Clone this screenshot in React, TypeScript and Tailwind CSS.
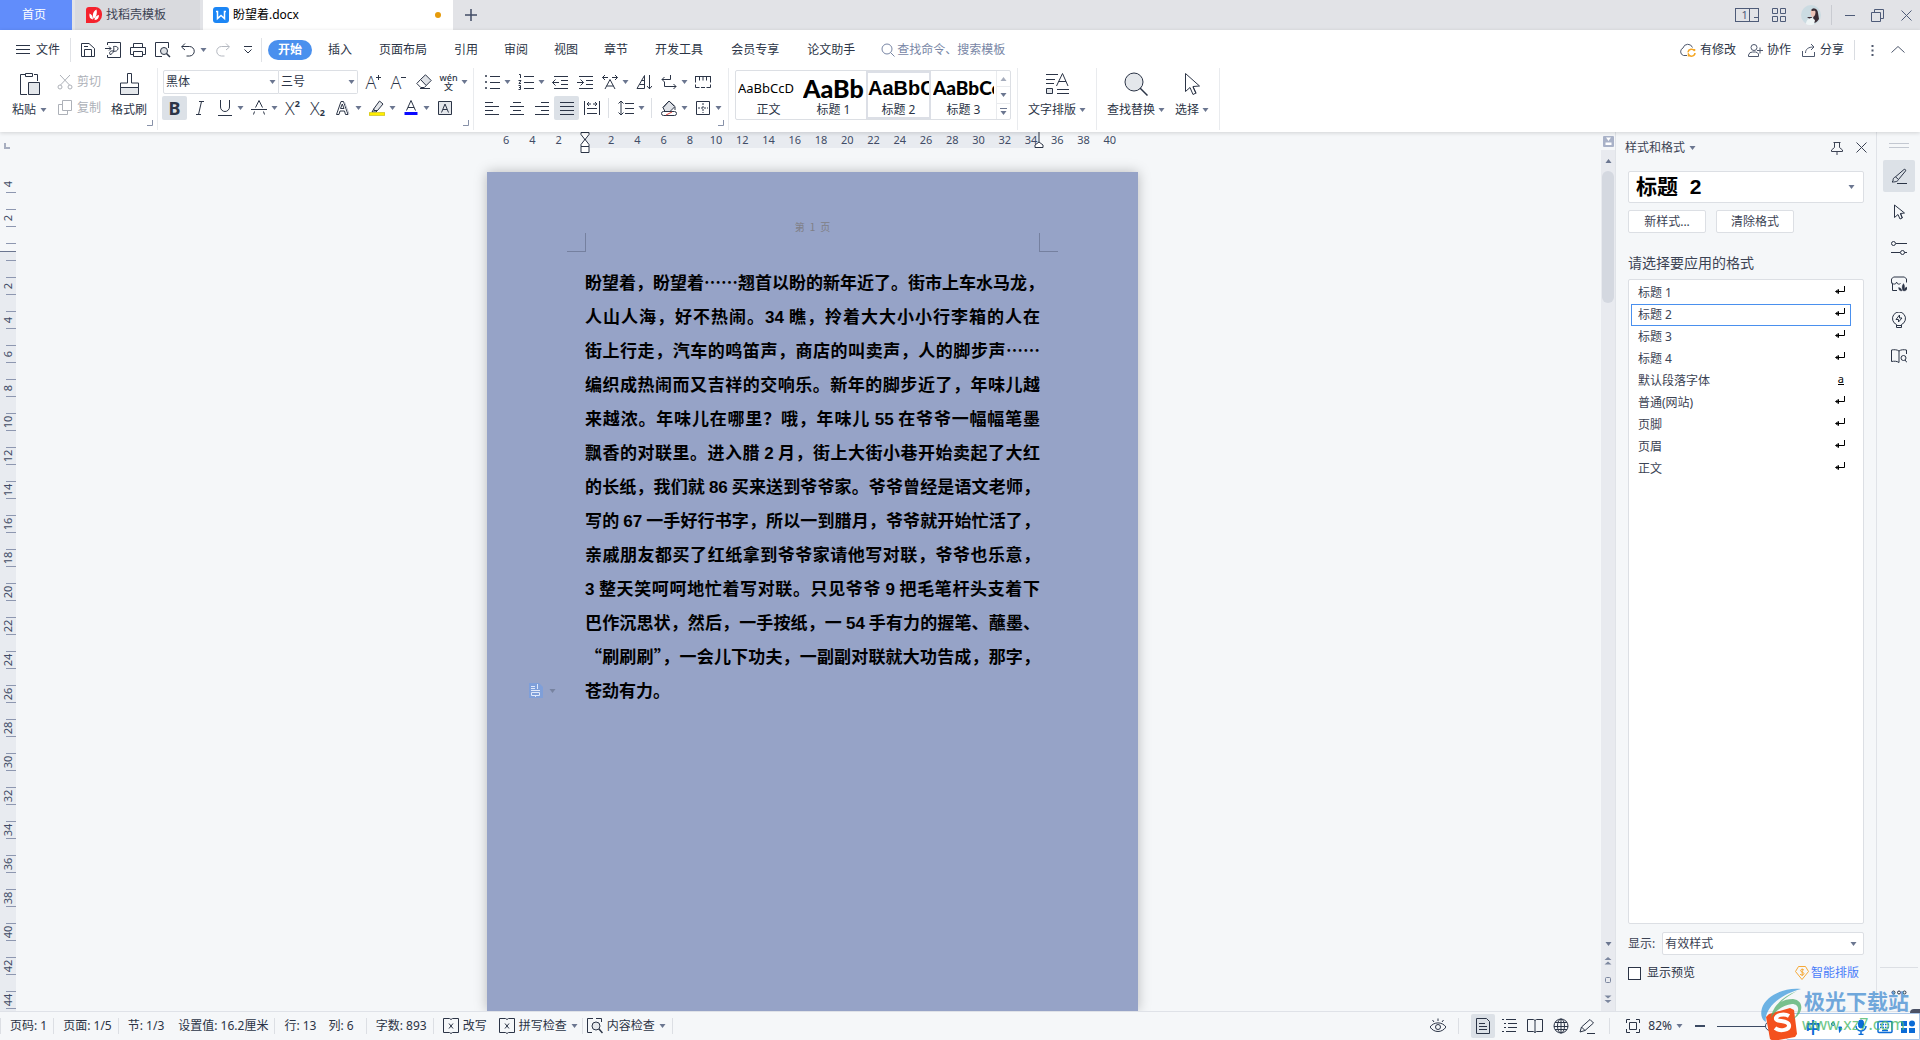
import { FC, ReactNode, useState } from 'react';
import clsx from 'clsx';

const MENU_TABS = [
  '插入',
  '页面布局',
  '引用',
  '审阅',
  '视图',
  '章节',
  '开发工具',
  '会员专享',
  '论文助手',
];

const DOC_LINES = [
  '盼望着，盼望着……翘首以盼的新年近了。街市上车水马龙，',
  '人山人海，好不热闹。34 瞧，拎着大大小小行李箱的人在',
  '街上行走，汽车的鸣笛声，商店的叫卖声，人的脚步声……',
  '编织成热闹而又吉祥的交响乐。新年的脚步近了，年味儿越',
  '来越浓。年味儿在哪里？哦，年味儿 55 在爷爷一幅幅笔墨',
  '飘香的对联里。进入腊 2 月，街上大街小巷开始卖起了大红',
  '的长纸，我们就 86 买来送到爷爷家。爷爷曾经是语文老师，',
  '写的 67 一手好行书字，所以一到腊月，爷爷就开始忙活了，',
  '亲戚朋友都买了红纸拿到爷爷家请他写对联，爷爷也乐意，',
  '3 整天笑呵呵地忙着写对联。只见爷爷 9 把毛笔杆头支着下',
  '巴作沉思状，然后，一手按纸，一 54 手有力的握笔、蘸墨、',
  '“刷刷刷”，一会儿下功夫，一副副对联就大功告成，那字，',
  '苍劲有力。',
];

const STYLE_LIST = [
  { name: '标题 1', mark: 'para' },
  { name: '标题 2', mark: 'para' },
  { name: '标题 3', mark: 'para' },
  { name: '标题 4', mark: 'para' },
  { name: '默认段落字体', mark: 'char' },
  { name: '普通(网站)', mark: 'para' },
  { name: '页脚', mark: 'para' },
  { name: '页眉', mark: 'para' },
  { name: '正文', mark: 'para' },
];

const GALLERY = [
  { name: '正文', sample: 'AaBbCcD', font: 'text-[13px]' },
  { name: '标题 1', sample: 'AaBbC', font: "font-['Lato'] text-[25px] font-black" },
  { name: '标题 2', sample: 'AaBbC', font: "font-['Liberation_Sans'] text-[20px] font-bold" },
  { name: '标题 3', sample: 'AaBbCc', font: "font-['Lato'] text-[19px] font-black" },
];

// ruler numbers, counted outwards from the margin
const H_RULER = [6, 4, 2, 0, ...Array.from({ length: 20 }, (_, i) => (i + 1) * 2)];
const V_RULER = Array.from({ length: 22 }, (_, i) => (i + 1) * 2);

const Icon: FC<{ size?: number; box?: number; className?: string; children: ReactNode }> = ({
  size = 16,
  box = 16,
  className,
  children,
}) => (
  <svg
    width={size}
    height={size}
    viewBox={`0 0 ${box} ${box}`}
    fill="none"
    stroke="currentColor"
    strokeWidth={1}
    className={clsx('shrink-0', className)}
    aria-hidden="true"
  >
    {children}
  </svg>
);

const Caret: FC<{ className?: string }> = ({ className }) => (
  <svg width="7" height="4" viewBox="0 0 7 4" className={clsx('shrink-0 text-[#6b7690]', className)} aria-hidden="true">
    <path d="M0.5 0h6L3.5 4z" fill="currentColor" />
  </svg>
);

const Tool: FC<{ label: string; caret?: boolean; active?: boolean; children: ReactNode }> = ({
  label,
  caret,
  active,
  children,
}) => (
  <button
    aria-label={label}
    className={clsx('flex h-6 shrink-0 items-center rounded-xs', active && 'bg-[#dce1e7]')}
  >
    <span className="flex w-[25px] items-center justify-center">{children}</span>
    {caret && (
      <span className="w-[9px]">
        <Caret />
      </span>
    )}
  </button>
);

const Launcher = () => (
  <button aria-label="更多设置" className="flex h-2 w-full justify-end pr-1">
    <Icon size={6} box={6} className="text-[#8791a8]">
      <path d="M5.5 0v5.5H0" />
    </Icon>
  </button>
);

const GroupSep = () => <div className="mt-0.5 h-[62px] w-px shrink-0 bg-[#e9ebee]" />;

const TitleBar = () => (
  <header className="flex h-[30px] shrink-0 bg-[#e2e3e7]">
    <button className="w-[72px] bg-[#618dfb] pr-1 text-white">首页</button>
    <button className="ml-[3px] flex w-[125px] items-center gap-1 bg-[#d9dade] pl-[11px] text-[#3c4354]">
      <Icon className="text-white">
        <path d="M3 0h6.5A6.5 6.5 0 0 1 16 6.5V8a8 8 0 0 1-8 8H0V3a3 3 0 0 1 3-3z" fill="#f5222d" stroke="none" />
        <path
          d="M7.800 12C6 8 7 4.500 10.500 2.500c1 3.500 0 7-2.700 9.500zM7 12.500C4 12 3 10 3.500 6.500c2.500 1 3.500 3 3.500 6zM8.500 13c3 0 4.500-2 4.500-5-2.500.5-4 2-4.500 5z"
          fill="currentColor"
          stroke="none"
        />
      </Icon>
      找稻壳模板
    </button>
    <button className="ml-[3px] flex w-[250px] items-center gap-1 bg-white pr-3 pl-2.5 text-black">
      <Icon className="text-white">
        <rect width="16" height="16" rx="3" fill="#1c86f5" stroke="none" />
        <path d="M3 4.500h1.500v7L8 8.500l3.500 3V4.500H13" strokeWidth="1.500" />
      </Icon>
      盼望着.docx
      <span className="ml-auto size-[6px] rounded-full bg-[#e69b0b]" />
    </button>
    <button aria-label="新建" className="ml-3 text-[#414c66]">
      <Icon size={12} box={12}>
        <path d="M6 0v12M0 6h12" strokeWidth="1.500" />
      </Icon>
    </button>
    <div className="ml-auto flex items-center pr-2 text-[#4e5b78]">
      <button aria-label="窗口" className="flex h-[14px] w-6 items-center border border-current text-[11px] leading-3">
        <span className="h-3 w-[15px] border-r border-current pl-1">1</span>
        <span className="ml-1 h-1.5 w-1 border-b border-current" />
      </button>
      <button aria-label="应用" className="ml-[13px]">
        <Icon size={14} box={14}>
          <path d="M.5.5h5v5h-5zM8.500.5h5v5h-5zM.5 8.500h5v5h-5zM8.500 8.500h5v5h-5z" />
        </Icon>
      </button>
      <button aria-label="帐户" className="ml-[15px]">
        <svg width="20" height="20" viewBox="0 0 20 20" aria-hidden="true">
          <circle cx="10" cy="10" r="10" fill="#cbdbe2" />
          <path d="M11 4c3-1.500 6 .5 6 4l1 6c-2 3-4 4-5 4l-1-7z" fill="#3a2c34" />
          <path d="M10.500 5c2-1 4 0 4 2.500S13 12 11.500 12 9 7 10.500 5z" fill="#edc4b8" />
          <path d="M10 5c2-2 4-1.500 5 .5l-4 .5zM6 12l5 0-1 3z" fill="#3a2c34" />
          <path d="M5 19c0-4 3-6 6-6l3 2-1 4.500c-3 1-6 .7-8-.5z" fill="#eef4f5" />
        </svg>
      </button>
      <span className="mx-2.5 h-5 w-px bg-[#c9cbd1]" />
      <button aria-label="最小化" className="mx-[3px]">
        <Icon size={10} box={10}>
          <path d="M0 5.500h10" />
        </Icon>
      </button>
      <button aria-label="还原" className="ml-[13px]">
        <Icon size={13} box={13}>
          <path d="M.5 3.500h9v9h-9zM3.500 3V.5h9v9H10" />
        </Icon>
      </button>
      <button aria-label="关闭" className="ml-[17px]">
        <Icon size={11} box={11}>
          <path d="M.5.5l10 10M10.500.5l-10 10" />
        </Icon>
      </button>
    </div>
  </header>
);

const QuickButton: FC<{ label: string; children: ReactNode }> = ({ label, children }) => (
  <button aria-label={label} className="flex w-[25px] justify-center">
    {children}
  </button>
);

const MenuBar = () => (
  <nav className="flex h-9 shrink-0 items-center pt-1 text-[#2b3446]">
    <button className="ml-4 flex items-center gap-1.5">
      <Icon size={14} box={14}>
        <path d="M0 2.500h14M0 6.500h14M0 10.500h14" />
      </Icon>
      文件
    </button>
    <span className="ml-2.5 h-6 w-px bg-[#e0e2e6]" />
    <div className="ml-1 flex items-center">
      <QuickButton label="保存">
        <Icon>
          <path d="M1.500 1.500h7.500l5.500 5v8h-13zM4.500 14V7.500h7V14M4 4.500h4" />
        </Icon>
      </QuickButton>
      <QuickButton label="输出为PDF">
        <Icon>
          <path d="M2.500 3V.5h13v15h-13V13M0 6.500h6M4 4.500l2 2-2 2M5 12.500c3.500-.5 4.500-5 3.500-8 3.500-.5 5.500 1 4 3.500-1 1.500-3.500 1.500-4.500 1-3-.5-4 1.500-3 3.500" />
        </Icon>
      </QuickButton>
      <QuickButton label="打印">
        <Icon>
          <path d="M3.500 5V1.500h9V5M3.500 12.500h-3v-7h15v7h-3M3.500 9.500h9v5h-9z" />
        </Icon>
      </QuickButton>
      <QuickButton label="打印预览">
        <Icon>
          <path d="M13.500 6V.5h-13v14H7" />
          <circle cx="9" cy="9" r="3.500" fill="#dfe2e6" />
          <path d="M11.500 11.500l3.500 3.500" strokeWidth="1.500" />
        </Icon>
      </QuickButton>
      <QuickButton label="撤销">
        <Icon>
          <path d="M5 1.500L1.500 5 5 8M2 4.500h7.500a4.500 4.500 0 0 1 0 9.500H6.500" />
        </Icon>
      </QuickButton>
      <Caret />
      <button aria-label="恢复" className="ml-2 text-[#b4b8c0]">
        <Icon>
          <path d="M11 1.500L14.500 5 11 8M14 4.500H6.500a4.500 4.500 0 0 0 0 9.500H9.500" />
        </Icon>
      </button>
      <button aria-label="自定义快速访问" className="ml-3">
        <Icon size={10} box={10}>
          <path d="M1 1.500h8M1.500 4.500L5 8l3.500-3.500" />
        </Icon>
      </button>
    </div>
    <span className="ml-2 h-6 w-px bg-[#e0e2e6]" />
    <button className="mr-[3px] ml-1.5 h-5 w-11 rounded-full bg-[#4a90ee] font-bold text-white">开始</button>
    {MENU_TABS.map((tab) => (
      <button key={tab} className={tab.length > 2 ? 'px-3.5' : 'px-[13px]'}>
        {tab}
      </button>
    ))}
    <label className="ml-3 flex items-center gap-0.5 text-[#7886a5]">
      <Icon size={14} box={14}>
        <circle cx="6" cy="6" r="5" />
        <path d="M9.500 9.500l4 4" />
      </Icon>
      <input
        aria-label="查找命令、搜索模板"
        placeholder="查找命令、搜索模板"
        className="w-32 bg-transparent outline-none placeholder:text-[#7886a5]"
      />
    </label>
    <div className="ml-auto flex items-center pr-[15px]">
      <button className="flex items-center gap-1">
        <Icon size={17} box={17} className="text-[#4e586d]">
          <path d="M8 13.500H4.500a4 4 0 0 1-.5-7.500 5 5 0 0 1 9.500-.5" />
          <path d="M9 10a3.500 3.500 0 0 1 6.500-1v-2M16 11a3.500 3.500 0 0 1-6.500 1.500v2" stroke="#f5a623" strokeWidth="1.500" />
        </Icon>
        有修改
      </button>
      <button className="ml-3 flex items-center gap-1">
        <Icon size={15} box={15} className="text-[#4e586d]">
          <circle cx="6" cy="4.500" r="3" />
          <path d="M.5 13.500V12a4 4 0 0 1 4-3h3a4 4 0 0 1 3 2v2.500zM9 7.500h6M12 4.500v6" />
        </Icon>
        协作
      </button>
      <button className="ml-2.5 flex items-center gap-1">
        <Icon size={15} box={15} className="text-[#4e586d]">
          <path d="M1.500 8v5.500h12V9M4.500 10c0-4 3-6 8-6M10 1l3 3-3 3" />
        </Icon>
        分享
      </button>
      <span className="ml-2.5 h-5 w-px bg-[#d9dce1]" />
      <button aria-label="更多" className="ml-4">
        <Icon size={3} box={3} className="h-3">
          <path d="M.5-3.500h2v2h-2zM.5 1h2v2h-2zM.5 5.500h2v2h-2z" fill="#4e586d" stroke="none" />
        </Icon>
      </button>
      <button aria-label="收起功能区" className="ml-[17px] text-[#4e586d]">
        <Icon size={14} box={14}>
          <path d="M.5 9.500L7 3.500l6.500 6" />
        </Icon>
      </button>
    </div>
  </nav>
);

const ClipboardGroup = () => (
  <div className="flex w-[157px] shrink-0 flex-col">
    <div className="flex h-[54px] text-[#2b3446]">
      <button className="ml-3 flex flex-col items-center justify-between pt-1.5 pb-0.5">
        <Icon size={24} box={24}>
          <path d="M8 2.500H2.500v20H9M16 2.500h3.500V9" />
          <path d="M7.500 1.500h7v3h-7z" />
          <path d="M10.500 10.500h11v12h-11z" fill="#e4e7eb" />
        </Icon>
        <span className="flex items-center gap-1">
          粘贴
          <Caret />
        </span>
      </button>
      <div className="ml-2.5 flex flex-col gap-0.5 pt-1 text-[#adb1b8]">
        <button className="flex h-6 items-center gap-1">
          <Icon>
            <path d="M3 1l9.500 10M13 1L3.500 11" />
            <circle cx="3" cy="13" r="2" />
            <circle cx="13" cy="13" r="2" />
          </Icon>
          剪切
        </button>
        <button className="flex h-6 items-center gap-1">
          <Icon>
            <path d="M5.500.5h9v10h-9zM5 4.500H1.500v10h9V11" />
          </Icon>
          复制
        </button>
      </div>
      <button className="ml-2.5 flex flex-col items-center justify-between pt-1.5 pb-0.5">
        <Icon size={24} box={24}>
          <path d="M10.500 11V1.500h4V11h7v5.500h-18V11z" />
          <path d="M3.500 15.500h18v7h-18z" fill="#e4e7eb" />
        </Icon>
        格式刷
      </button>
    </div>
    <Launcher />
  </div>
);

const Letter: FC<{ children: ReactNode }> = ({ children }) => (
  <span className="font-['Open_Sans','Noto_Sans'] text-[18px] leading-5 font-light">{children}</span>
);

const FontGroup = () => (
  <div className="flex w-[315px] shrink-0 flex-col text-[#2b3446]">
    <div className="flex h-[54px] flex-col gap-0.5 pt-1 pl-1">
      <div className="flex h-6 items-center">
        <div className="relative ml-px flex h-6 w-[116px] items-center rounded-l-xs border border-[#dcdfe4]">
          <select aria-label="字体" className="w-full appearance-none bg-transparent pl-0.5 outline-none">
            <option>黑体</option>
          </select>
          <Caret className="absolute right-0.5" />
        </div>
        <div className="relative mr-[3px] flex h-6 w-[79px] items-center rounded-r-xs border border-l-0 border-[#dcdfe4]">
          <select aria-label="字号" className="w-full appearance-none bg-transparent pl-0.5 outline-none">
            <option>三号</option>
          </select>
          <Caret className="absolute right-0.5" />
        </div>
        <Tool label="增大字号">
          <Letter>A</Letter>
          <Icon size={5} box={5} className="mb-2.5">
            <path d="M2.500 0v5M0 2.500h5" />
          </Icon>
        </Tool>
        <Tool label="减小字号">
          <Letter>A</Letter>
          <Icon size={5} box={5} className="mb-2.5">
            <path d="M0 2.500h5" />
          </Icon>
        </Tool>
        <Tool label="清除格式">
          <Icon>
            <path d="M4.500 5.500L9.500.800l5.700 5.700-5 5z" fill="#dfe2e7" />
            <path d="M4.500 5.500L.800 9.500l4 4h3.500l2-2M4 14.500h10" />
          </Icon>
        </Tool>
        <Tool label="拼音指南" caret>
          <span className="flex flex-col items-center text-[9px] leading-[9px] font-medium">
            <span>wén</span>
            <span>文</span>
          </span>
        </Tool>
      </div>
      <div className="flex h-6">
        <Tool label="加粗" active>
          <b className="text-[18px] leading-5">B</b>
        </Tool>
        <Tool label="倾斜">
          <Icon>
            <path d="M7 1.500h5M4 14.500h5M9.500 1.500l-3 13" />
          </Icon>
        </Tool>
        <Tool label="下划线" caret>
          <Icon>
            <path d="M3.500 0v7a4.500 4.500 0 0 0 9 0V0M1 15.500h14" />
          </Icon>
        </Tool>
        <Tool label="删除线" caret>
          <Icon>
            <path d="M4.500 7.500L8 .5l3.500 7M0 9.500h16M3.500 11.500l-1 3M12.500 11.500l1 3" />
          </Icon>
        </Tool>
        <Tool label="上标">
          <Letter>X</Letter>
          <span className="mb-2 text-[9px] leading-3 font-bold">2</span>
        </Tool>
        <Tool label="下标">
          <Letter>X</Letter>
          <span className="mt-2.5 text-[9px] leading-3 font-bold">2</span>
        </Tool>
        <Tool label="文字效果" caret>
          <Icon>
            <path d="M1.500 14.500L6 1.500h2.500l4.500 13h-2.500l-1-3.500H5l-1 3.500zM5.500 8.500h3.500L7.300 4z" />
            <path d="M9.500 2l4.500 12" stroke="#b6bbc6" />
          </Icon>
        </Tool>
        <Tool label="突出显示" caret>
          <Icon>
            <path d="M5 8.500L10.500 1l3.500 3L8.500 10.500H5zM5 8.500l-2 3.500h4l1.500-1.500" fill="#e4e7eb" />
            <path d="M0 14h16" stroke="#ffee00" strokeWidth="3.500" />
            <path d="M.5 12.500h15v3H.5z" stroke="#b8ae3a" strokeWidth=".5" />
          </Icon>
        </Tool>
        <Tool label="字体颜色" caret>
          <Icon>
            <path d="M3.500 10.500L8 .5l4.500 10M5 7.500h6" />
            <path d="M1.500 13.500h13" stroke="#0a0aff" strokeWidth="3" />
          </Icon>
        </Tool>
        <Tool label="字符底纹">
          <Icon>
            <path d="M1.500 1.500h13v13h-13z" fill="#e4e7eb" />
            <path d="M4.500 12.500L8 4l3.500 8.500M6 9.500h4" />
          </Icon>
        </Tool>
      </div>
    </div>
    <Launcher />
  </div>
);

const ToolSep = () => <span className="mx-1 my-0.5 w-px bg-[#dcdfe4]" />;

const ParagraphGroup = () => (
  <div className="flex w-[254px] shrink-0 flex-col text-[#2b3446]">
    <div className="flex h-[54px] flex-col gap-0.5 pt-1 pl-[5px]">
      <div className="flex h-6">
        <Tool label="项目符号" caret>
          <Icon>
            <path d="M6 2.500h10M6 8.500h10M6 14.500h10M1.500 1.500h1v1h-1zM1.500 7.500h1v1h-1zM1.500 13.500h1v1h-1z" />
          </Icon>
        </Tool>
        <Tool label="编号" caret>
          <Icon>
            <path d="M6 2.500h10M6 8.500h10M6 14.500h10" />
            <path d="M1 .5h1.500v3.500M.5 6.500H3L1 9.500h2M.5 11.500h2v4H.5M1 13.500h1.500" />
          </Icon>
        </Tool>
        <Tool label="减少缩进量">
          <Icon>
            <path d="M2 2.500h14M9 6.500h7M9 10.500h7M2 14.500h14M.5 8.500H7M3.500 5.500l-3 3 3 3" />
          </Icon>
        </Tool>
        <Tool label="增加缩进量">
          <Icon>
            <path d="M2 2.500h14M9 6.500h7M9 10.500h7M2 14.500h14M0 8.500h6.500M3.500 5.500l3 3-3 3" />
          </Icon>
        </Tool>
        <Tool label="中文版式" caret>
          <Icon>
            <path d="M3 15L8 5.500 13 15M4.500 12h7M.5 3.500H6M3 1L.5 3.500 3 6M15.500 3.500H10M13 1l2.500 2.500L13 6" />
          </Icon>
        </Tool>
        <Tool label="排序">
          <Icon>
            <path d="M1 14.500L8.500 1.500v13zM3.500 10.500h5M5.500 6.500h3M13.500 1v14M11 12l2.500 2.800L16 12" />
          </Icon>
        </Tool>
        <Tool label="显示编辑标记" caret>
          <Icon>
            <path d="M9.500 1v4.500H1M3.500 3L1 5.500 3.500 8M3.500 8v4.500H15M12.500 10l2.500 2.500-2.500 2.500" />
          </Icon>
        </Tool>
        <Tool label="制表位">
          <Icon>
            <path d="M0 2.500h16M.5 2.500v6M4.500 2.500v4M8 2.500v4M11.500 2.500v4M15.500 2.500v6M.5 10.500v3h4M11.500 13.500h4v-3M6 13.500h4" />
          </Icon>
        </Tool>
      </div>
      <div className="flex h-6">
        <Tool label="左对齐">
          <Icon>
            <path d="M1 2.500h8M1 6.500h14M1 10.500h8M1 14.500h14" />
          </Icon>
        </Tool>
        <Tool label="居中对齐">
          <Icon>
            <path d="M4 2.500h8M1 6.500h14M4 10.500h8M1 14.500h14" />
          </Icon>
        </Tool>
        <Tool label="右对齐">
          <Icon>
            <path d="M7 2.500h8M1 6.500h14M7 10.500h8M1 14.500h14" />
          </Icon>
        </Tool>
        <Tool label="两端对齐" active>
          <Icon>
            <path d="M1 2.500h14M1 6.500h14M1 10.500h14M1 14.500h14" />
          </Icon>
        </Tool>
        <Tool label="分散对齐">
          <Icon>
            <path d="M.5 1v14M15.500 1v14M3 8.500h10M3 13.500h10M3 4h4M5 2L3 4l2 2M13 4H9M11 2l2 2-2 2" />
          </Icon>
        </Tool>
        <ToolSep />
        <Tool label="行距" caret>
          <Icon>
            <path d="M7 3.500h9M7 8.500h9M7 13.500h9M3 1v14M.5 3.500L3 1l2.500 2.500M.5 12.500L3 15l2.500-2.500" />
          </Icon>
        </Tool>
        <ToolSep />
        <Tool label="底纹" caret>
          <Icon>
            <path d="M2 7.500L8 1l6 5.500-5 5H4z" fill="#dfe2e7" />
            <path d="M2 7.500L8 1l5 5M14 7v3" />
            <rect x=".5" y="11.500" width="15" height="4" rx="2" fill="#fff" />
            <path d="M5 15l6-3" stroke="#e0483e" />
          </Icon>
        </Tool>
        <Tool label="边框" caret>
          <Icon>
            <path d="M1.500 1.500h13v13h-13z" />
            <path d="M8 3v10M3 8h10" strokeDasharray="2 1" />
          </Icon>
        </Tool>
      </div>
    </div>
    <Launcher />
  </div>
);

const StyleGallery: FC<{ current: string; onPick: (name: string) => void }> = ({ current, onPick }) => (
  <div className="mx-1.5 mt-1 flex h-[50px] w-[276px] shrink-0 rounded-xs border border-[#dcdfe4]">
    {GALLERY.map((style) => (
      <button
        key={style.name}
        onClick={() => onPick(style.name)}
        className={clsx(
          'flex w-[65px] flex-col items-center overflow-hidden border-2',
          current === style.name ? 'border-[#dcdfe6]' : 'border-transparent'
        )}
      >
        <span className={clsx('h-[30px] w-full overflow-hidden text-left leading-[30px] whitespace-nowrap text-black', style.font)}>
          {style.sample}
        </span>
        <span className="leading-[14px] text-[#2b3446]">{style.name}</span>
      </button>
    ))}
    <div className="flex flex-1 flex-col divide-y divide-[#e9ebee] border-l border-[#e9ebee]">
      <button aria-label="上一行" className="flex flex-1 items-center justify-center">
        <Caret className="rotate-180 opacity-60" />
      </button>
      <button aria-label="下一行" className="flex flex-1 items-center justify-center">
        <Caret />
      </button>
      <button aria-label="更多样式" className="flex flex-1 flex-col items-center justify-center gap-0.5">
        <span className="h-px w-[7px] bg-[#6b7690]" />
        <Caret />
      </button>
    </div>
  </div>
);

const BigTool: FC<{ label: string; icon: ReactNode }> = ({ label, icon }) => (
  <button className="flex h-[54px] shrink-0 flex-col items-center justify-between pt-1.5 pb-0.5 text-[#2b3446]">
    {icon}
    <span className="flex items-center gap-[3px]">
      {label}
      <Caret />
    </span>
  </button>
);

const Ribbon: FC<{ current: string; onPick: (name: string) => void }> = ({ current, onPick }) => (
  <div className="flex h-[66px] shrink-0">
    <ClipboardGroup />
    <GroupSep />
    <FontGroup />
    <GroupSep />
    <ParagraphGroup />
    <GroupSep />
    <StyleGallery current={current} onPick={onPick} />
    <GroupSep />
    <div className="px-2.5">
      <BigTool
        label="文字排版"
        icon={
          <Icon size={24} box={24}>
            <path d="M1 2.500h12M1 7.500h9M1 11.500h8M11.500 14L17.500 1.500 23 14M13.500 9.500h7.500M12 17.500h12M12 21.500h12" />
            <path d="M1.500 16.500h6v5h-6z" fill="#e4e7eb" />
          </Icon>
        }
      />
    </div>
    <GroupSep />
    <div className="flex gap-2.5 px-2.5">
      <BigTool
        label="查找替换"
        icon={
          <Icon size={24} box={24}>
            <circle cx="10" cy="10" r="9" fill="#e4e7eb" />
            <path d="M16 16l7.500 7.500" strokeWidth="1.500" />
          </Icon>
        }
      />
      <BigTool
        label="选择"
        icon={
          <Icon size={24} box={24}>
            <path d="M5.500 1.500v18l4.500-4 3 7 3-1.500-3-6.500 6.500-.5z" />
            <path d="M13 15l3 6.500" />
          </Icon>
        }
      />
    </div>
    <GroupSep />
  </div>
);

const VerticalRuler = () => (
  <div className="flex w-4 shrink-0 flex-col overflow-hidden pt-[11px] text-[11px] leading-3 text-[#414c66]">
    <Icon size={6} box={6} className="mb-[18px] ml-1 text-[#a7aec0]">
      <path d="M1 0v5h5" strokeWidth="2" />
    </Icon>
    {[4, 2].map((n) => (
      <div key={n} className="flex h-[34px] shrink-0 py-2 pl-1.5">
        <div className={clsx('flex flex-1 items-center border-[#8d97b0]', n === 4 ? 'border-b' : 'border-y')}>
          <span className="-ml-1 w-3 -rotate-90 text-center">{n}</span>
        </div>
      </div>
    ))}
    <div className="h-[34px] shrink-0">
      <div className="h-[17px] border-b border-[#6b7690] pt-2 pl-1.5">
        <div className="border-t border-[#8d97b0]" />
      </div>
      <div className="h-[17px] bg-[#e8ebf0] pt-2 pl-1.5">
        <div className="border-t border-[#8d97b0]" />
      </div>
    </div>
    {V_RULER.map((n) => (
      <div key={n} className="flex h-[34px] shrink-0 bg-[#e8ebf0] py-2 pl-1.5">
        <div className="flex flex-1 items-center border-y border-[#8d97b0]">
          <span className="-ml-1 flex w-3 -rotate-90 justify-center">{n}</span>
        </div>
      </div>
    ))}
  </div>
);

const HorizontalRuler = () => (
  <div className="relative h-4 w-[651px] pr-[15px] pl-1.5">
    <div className="absolute inset-y-0 right-[99px] left-[98px] bg-[#e8ebf0]" />
    <div className="relative grid h-full grid-cols-[repeat(24,minmax(0,1fr))] items-center text-center text-[11px] leading-4 text-[#414c66]">
      {H_RULER.map((n, i) => (
        <span key={i}>{n || ''}</span>
      ))}
    </div>
    <svg width="10" height="22" viewBox="0 0 10 22" className="absolute top-0 left-[93px]" fill="#fff" stroke="#2b3446" aria-hidden="true">
      <path d="M1 .5h8v2L5.500 7v1L9 12.500v2H1v-2L4.500 8V7L1 2.500zM1 14.500h8v6H1z" />
    </svg>
    <svg width="10" height="16" viewBox="0 0 10 16" className="absolute top-0 right-[94px]" fill="#fff" stroke="#2b3446" aria-hidden="true">
      <path d="M5 0v10" />
      <path d="M5 10L1 13v2.500h8V13z" />
    </svg>
  </div>
);

const DocumentPage = () => (
  <article
    lang="zh-CN"
    className="relative mt-6 min-h-0 w-[651px] flex-1 bg-[#96a3c7] px-[98px] pt-[49px] shadow-[0_0_12px_rgba(0,0,0,0.25)]"
  >
    <p className="text-center font-['Noto_Sans_CJK_SC',sans-serif] text-[10px] leading-3 text-[#7f7f86]">第&ensp;1&ensp;页</p>
    <div className="-mx-[18px] flex justify-between">
      <span className="h-[19px] w-[19px] border-r border-b border-[#75809f]" />
      <span className="h-[19px] w-[19px] border-b border-l border-[#75809f]" />
    </div>
    <div className="pt-[13px] font-['Noto_Sans_CJK_SC',sans-serif] text-[17px] leading-[34px] font-bold text-black">
      {DOC_LINES.map((line, i) => (
        <p
          key={i}
          className={clsx('whitespace-nowrap', i < DOC_LINES.length - 1 && '[text-align-last:justify]')}
        >
          {line.split(/(\d+)/).map((part, j) =>
            /^\d/.test(part) ? (
              <span key={j} className="font-['Liberation_Sans'] leading-none">
                {part}
              </span>
            ) : (
              part
            )
          )}
        </p>
      ))}
    </div>
    <button aria-label="段落布局" className="absolute top-[511px] left-[42px] flex items-center gap-1.5">
      <svg width="14" height="15" viewBox="0 0 14 15" fill="none" stroke="#dfe8fa" aria-hidden="true">
        <path d="M0 0h10l4 4v11H0z" fill="#7f9fd9" stroke="none" />
        <path d="M2 3.500h4M2 5.500h4M2 7.500h9M8.500 1v5M2.500 9.500h8v3h-8zM6.500 12v2" />
      </svg>
      <Caret className="opacity-70" />
    </button>
  </article>
);

const Scrollbar = () => (
  <div className="flex w-[14px] shrink-0 flex-col items-center">
    <button aria-label="标尺" className="flex h-[18px] items-center">
      <Icon size={11} box={11}>
        <rect width="11" height="11" rx="1" fill="#a9b2c8" stroke="none" />
        <path d="M3 1.500h5L5.500 5zM2.500 9V6.500h6V9z" fill="#fff" stroke="none" />
      </Icon>
    </button>
    <div className="flex w-full flex-1 flex-col items-center bg-[#e8eaef] text-[#7c879f]">
      <button aria-label="向上滚动" className="flex h-[21px] items-center">
        <Caret className="rotate-180" />
      </button>
      <div className="h-[132px] w-3 rounded-full bg-[#d4d8e0]" />
      <div className="mt-auto flex flex-col items-center gap-[11px] pb-2">
        <Caret />
        {['上一页', '选择对象', '下一页'].map((label, i) => (
          <button key={label} aria-label={label}>
            <Icon size={8} box={8}>
              {i === 0 && <path d="M4 0l3.500 3h-7zM4 4.500L7.500 7.500h-7z" fill="currentColor" stroke="none" />}
              {i === 1 && <rect x="1.500" y="1.500" width="5" height="5" rx="1" />}
              {i === 2 && <path d="M4 3.500L.5.5h7zM4 8L.5 5h7z" fill="currentColor" stroke="none" />}
            </Icon>
          </button>
        ))}
      </div>
    </div>
  </div>
);

const StylePanel: FC<{ current: string; onPick: (name: string) => void }> = ({ current, onPick }) => {
  const [preview, setPreview] = useState(false);

  return (
    <aside className="flex w-[261px] shrink-0 flex-col border-l border-[#e0e3e8] pr-3 pl-3 text-[#3c4354]">
      <div className="-ml-[3px] flex h-[39px] items-center pt-0.5 pb-2.5">
        <button className="flex items-center gap-1">
          样式和格式
          <Caret />
        </button>
        <button aria-label="固定" className="ml-auto">
          <Icon size={14} box={14}>
            <path d="M3.500 1.500h7M4.500 1.500v5l-3 2.500v1.500h11V9l-3-2.500v-5M7 10.500V14" />
          </Icon>
        </button>
        <button aria-label="关闭窗格" className="-mr-[3px] ml-3">
          <Icon size={11} box={11}>
            <path d="M.5.5l10 10M10.500.5l-10 10" />
          </Icon>
        </button>
      </div>
      <div className="relative flex h-8 items-center rounded-xs border border-[#dcdfe4] bg-white">
        <select
          aria-label="当前样式"
          value={current}
          onChange={(e) => onPick(e.target.value)}
          className="w-full appearance-none bg-transparent pl-[7px] font-['Liberation_Sans','Noto_Sans_CJK_SC',sans-serif] text-[21px] leading-7 font-bold text-black outline-none"
        >
          {STYLE_LIST.map((s) => (
            <option key={s.name} value={s.name}>
              {s.name.replace(' ', '\u00a0\u00a0')}
            </option>
          ))}
        </select>
        <Caret className="absolute right-2" />
      </div>
      <div className="mt-[7px] flex gap-2.5">
        <button className="h-[23px] w-[78px] rounded-xs border border-[#dcdfe4] bg-white">新样式...</button>
        <button className="h-[23px] w-[78px] rounded-xs border border-[#dcdfe4] bg-white">清除格式</button>
      </div>
      <h2 className="mt-5 mb-1.5 text-[14px] leading-5">请选择要应用的格式</h2>
      <ul className="min-h-0 flex-1 rounded-xs border border-[#dcdfe4] bg-white py-0.5 pr-3 pl-0.5">
        {STYLE_LIST.map((s) => (
          <li key={s.name}>
            <button
              onClick={() => onPick(s.name)}
              className={clsx(
                'flex h-[22px] w-full items-center justify-between border pr-[5px] pl-1.5',
                current === s.name ? 'border-[#4a90ee]' : 'border-transparent'
              )}
            >
              {s.name}
              {s.mark === 'para' ? (
                <Icon size={10} box={10} className="mb-1 text-black">
                  <path d="M9.500 0v5.500H1M3.500 3.500v4L.5 5.500z" />
                </Icon>
              ) : (
                <span className="mr-px mb-1 border-b border-black text-[11px] leading-[10px] text-black">a</span>
              )}
            </button>
          </li>
        ))}
      </ul>
      <div className="mt-2 flex items-center gap-[7px]">
        <label htmlFor="style-filter">显示:</label>
        <div className="relative flex h-[23px] flex-1 items-center rounded-xs border border-[#dcdfe4] bg-white">
          <select id="style-filter" className="w-full appearance-none bg-transparent pl-0.5 outline-none">
            <option>有效样式</option>
          </select>
          <Caret className="absolute right-1.5" />
        </div>
      </div>
      <div className="flex items-center pt-[10px] pb-[30px]">
        <label className="flex items-center gap-1.5 text-[#2b3446]">
          <input
            type="checkbox"
            checked={preview}
            onChange={(e) => setPreview(e.target.checked)}
            className="size-[13px] appearance-none border border-[#2b3446] bg-white checked:bg-[#4a90ee]"
          />
          显示预览
        </label>
        <button className="mr-[5px] ml-auto flex items-center gap-0.5 text-[#4a7dfa]">
          <Icon size={14} box={14} className="text-[#f5a836]">
            <path d="M3.500.5h7l3 5L7 13.500.500 5.500z" />
            <path d="M9 4C7.500 3 5.500 3.300 5.500 4.700S9 6 9 7.600 6.500 9.500 5 8.300M7.200 2.500v7.500" />
          </Icon>
          智能排版
        </button>
      </div>
    </aside>
  );
};

const SIDE_TOOLS = [
  {
    label: '样式',
    icon: <path d="M2 13c0-2.500.8-3.500 2.300-4L13 1.500c1-.7 2.200.5 1.500 1.500L7.500 11.500C7 13 5.500 14 1 14zM4.500 8.800l3 2.700M6 15.500h10" />,
  },
  { label: '选择', icon: <path d="M3.500 1v12.500L7 10.500l2 4.500 2.300-1L9.500 9.500l4-.5zM9.500 9.500l1.800 4.500" /> },
  {
    label: '设置',
    icon: (
      <>
        <path d="M5 3.500h11M0 12.500h9M13.500 12.500H16" />
        <circle cx="2.500" cy="3.500" r="2" />
        <circle cx="11.500" cy="12.500" r="2" />
      </>
    ),
  },
  {
    label: '素材',
    icon: (
      <>
        <path d="M1.500 8v6.500H6M1.500 8A2.500 2.500 0 0 1 .5 5V3L2.500 1h11l2 2v3.500M.5 6c1 3 5 2.500 5 0 .5 2.500 3 2.500 4 1.500" />
        <path d="M12 15c-1.500-3-1-5.500.5-7.500 1.500 2 1.500 5 0 7.500zM11 15c-2 0-3.500-1-3.500-3.500 2 0 3 1.500 3.500 3.500zM13 15c2 0 3.500-1.500 3-4-2 .5-3 2-3 4z" fill="currentColor" strokeWidth=".3" />
      </>
    ),
  },
  {
    label: '灵感',
    icon: (
      <>
        <path d="M5.500 12.500a6.500 6.500 0 1 1 5 0v3h-5zM6 13.500h4" />
        <path d="M8.500 3L5 7.500h2.500V10L11 6H8.500z" />
      </>
    ),
  },
  {
    label: '查阅',
    icon: (
      <>
        <path d="M8 3C6 1.500 3 1.500.5 2v11.500C3 13 6 13 8 14.500zM8 3c2-1.500 5-1.500 7.500-1v4" />
        <circle cx="12.500" cy="10" r="2.500" />
        <path d="M14 12l2 2.500" />
      </>
    ),
  },
];

const SideBar = () => (
  <div className="flex w-11 shrink-0 flex-col items-center border-l border-[#e0e3e8] text-[#2b3446]">
    <div className="mt-[11px] h-[5px] w-5 border-y border-[#c3c8d1]" />
    <div className="mt-3 flex flex-col gap-1">
      {SIDE_TOOLS.map((tool, i) => (
        <button
          key={tool.label}
          aria-label={tool.label}
          className={clsx('flex size-8 items-center justify-center rounded-xs', i === 0 && 'bg-[#dce1e7]')}
        >
          <Icon>{tool.icon}</Icon>
        </button>
      ))}
    </div>
    <div className="mt-auto w-[38px] border-t border-[#dcdfe4]" />
    <button aria-label="更多工具" className="mt-[22px] mb-4">
      <svg width="16" height="5" viewBox="0 0 16 5" fill="none" stroke="currentColor" aria-hidden="true">
        <circle cx="2.500" cy="2.500" r="1.500" />
        <circle cx="8" cy="2.500" r="1.500" />
        <circle cx="13.500" cy="2.500" r="1.500" />
      </svg>
    </button>
  </div>
);

const StatusSep: FC<{ className?: string }> = ({ className }) => (
  <span className={clsx('h-4 w-px bg-[#dcdfe4]', className)} />
);

const ProofIcon = () => (
  <Icon>
    <path d="M8 1.500L6.500.500H.500v14H6.500L8 15.500l1.500-1h6V.500h-6zM6 5.500l4 5M10 5.500l-4 5" />
  </Icon>
);

const StatusBar = () => (
  <footer className="flex h-[29px] shrink-0 items-center border-t border-[#dfe2e8] bg-[#f5f7f9] text-[#2b3446]">
    <StatusSep />
    <span className="pr-1.5 pl-[9px]">页码: 1</span>
    <StatusSep />
    <span className="pr-1.5 pl-[9px]">页面: 1/5</span>
    <StatusSep />
    <span className="pl-[9px]">节: 1/3</span>
    <span className="pr-1.5 pl-3.5">设置值: 16.2厘米</span>
    <StatusSep />
    <span className="pl-[9px]">行: 13</span>
    <span className="px-3">列: 6</span>
    <StatusSep />
    <span className="pr-1.5 pl-[9px]">字数: 893</span>
    <StatusSep />
    <button className="flex items-center gap-1 pl-[9px]">
      <ProofIcon />
      改写
    </button>
    <button className="flex items-center gap-1 pr-1 pl-3">
      <ProofIcon />
      拼写检查
      <Caret />
    </button>
    <StatusSep />
    <button className="flex items-center gap-1 pr-1.5 pl-1">
      <Icon>
        <path d="M6 .5H.5v14H5M9 .5h5.500V4" />
        <circle cx="9" cy="8" r="4" fill="#e4e7eb" />
        <path d="M12 11l3.500 4" strokeWidth="1.500" />
      </Icon>
      内容检查
      <Caret />
    </button>
    <StatusSep />

    <div className="ml-auto flex items-center">
      <button aria-label="护眼模式">
        <Icon>
          <path d="M0 9c4-5.500 12-5.500 16 0-4 6-12 6-16 0zM8 .5V3M2.500 2L4 4M13.500 2L12 4" />
          <circle cx="8" cy="9" r="2.500" />
        </Icon>
      </button>
      <StatusSep className="mx-3" />
      <div className="flex items-center gap-0.5">
        <button aria-label="页面视图" className="flex size-6 items-center justify-center rounded-xs bg-[#dce1e7]">
          <Icon>
            <path d="M1.500 .5h10l3 3v12h-13zM4 5.500h6M4 8.500h8M4 11.500h8" />
          </Icon>
        </button>
        <button aria-label="大纲视图" className="flex size-6 items-center justify-center">
          <Icon>
            <path d="M1 1.500h2M5 1.500h10M3 5.500h2M7 5.500h9M3 9.500h2M7 9.500h9M1 13.500h2M5 13.500h10" />
          </Icon>
        </button>
        <button aria-label="阅读版式" className="flex size-6 items-center justify-center">
          <Icon>
            <path d="M8 2.500L6.500 1.500H.5v12h6L8 14.500l1.500-1h6v-12h-6zM8 2.500v12" />
          </Icon>
        </button>
        <button aria-label="Web版式" className="flex size-6 items-center justify-center">
          <Icon>
            <circle cx="8" cy="8" r="7" />
            <ellipse cx="8" cy="8" rx="3.500" ry="7" />
            <path d="M1 8.500h14M2 4.500h12M2 11.500h12M8 1v14" />
          </Icon>
        </button>
        <button aria-label="写作模式" className="flex size-6 items-center justify-center">
          <Icon>
            <path d="M1 14l1.500-5L11 1.500 14.500 5 6 12.500zM2.500 9L6 12.500M8 15.500h8" />
          </Icon>
        </button>
      </div>
      <StatusSep className="mr-4 ml-2.5" />
      <button aria-label="最佳显示比例">
        <Icon size={14} box={14}>
          <path d="M.5 4V.5H4M10 .5h3.500V4M13.500 10v3.500H10M4 13.500H.5V10M3.500 3.500h7v7h-7z" />
        </Icon>
      </button>
      <button className="ml-2 flex items-center gap-1">
        82%
        <Caret />
      </button>
      <button aria-label="缩小" className="mr-3 ml-3 h-0.5 w-2.5 bg-[#3b4a63]" />
      <input
        type="range"
        aria-label="显示比例"
        defaultValue={41}
        className="mr-[75px] h-px w-32 appearance-none bg-[#3b4a63] [&::-webkit-slider-thumb]:size-2.5 [&::-webkit-slider-thumb]:appearance-none [&::-webkit-slider-thumb]:rounded-full [&::-webkit-slider-thumb]:border [&::-webkit-slider-thumb]:border-[#3b4a63] [&::-webkit-slider-thumb]:bg-white"
      />
    </div>
  </footer>
);

// input method tray and site badge floating over the corner of the window
const CornerOverlay = () => (
  <div className="absolute right-0 bottom-0 h-[52px] w-[160px]">
    <div className="absolute top-[21px] right-0 h-2 w-2.5 rounded-tl-sm bg-[#4b5266]" />
    <div className="absolute right-0 bottom-0 flex h-[27px] w-[134px] items-center justify-end gap-2 rounded-l-xs border border-[#a9c6e8] bg-white pr-1 text-[#0b6bd6]">
      <span className="w-4 text-center text-[15px] font-bold">中</span>
      <Icon>
        <circle cx="4" cy="5" r="1.500" />
        <path d="M9.500 8h3c0 3-1 4.500-2.500 5.500" fill="currentColor" />
      </Icon>
      <Icon>
        <rect x="5.500" y="1" width="5" height="8" rx="2.500" fill="currentColor" />
        <path d="M3 7a5 5 0 0 0 10 0M8 12v3M5.500 15.500h5" strokeWidth="1.500" />
      </Icon>
      <Icon>
        <rect x="1" y="2.500" width="14" height="11" rx="1" strokeWidth="1.500" />
        <path d="M3 5.500h10M3 8.500h10" strokeWidth="1.500" strokeDasharray="1.500 1" />
        <path d="M5 11.500h6" strokeWidth="1.500" />
      </Icon>
      <Icon size={14} box={14}>
        <path d="M0 1h6v5H0zM0 8h6v5H0zM8 8h6v5H8z" fill="currentColor" stroke="none" />
        <circle cx="11" cy="3.500" r="3" fill="currentColor" stroke="none" />
      </Icon>
    </div>
    <svg width="42" height="52" viewBox="0 0 42 52" fill="none" className="absolute top-0 left-0" aria-hidden="true">
      <path d="M9 26l21-6 4 2 3 24-2 3-22 4-3-2-4-22z" fill="#f4511e" />
      <path d="M29 28c-5-3-14-1-13 3 1 3 12 1 13 6 1 5-9 7-14 3" stroke="#fff" strokeWidth="4" />
      <g opacity=".75">
        <path d="M41 1C24-1 6 8 2 20c-2 7 0 12 4 14C4 26 12 9 41 1z" fill="#3f9bdd" />
        <path d="M37 3C22 9 12 19 11 30c4-7 12-13 21-14 8 0 8 8 1 15 9-4 13-18 0-20-5 0-9 1-12 3 4-4 10-8 16-11z" fill="#4fae6b" />
      </g>
    </svg>
    <div className="absolute top-0 right-[11px] flex flex-col items-end opacity-80">
      <span className="text-[21px] leading-[26px] font-bold text-[#4f94d4]">极光下载站</span>
      <span className="pr-1 text-[16px] leading-5 text-[#4cba6c]">www.xz7.com</span>
    </div>
  </div>
);

export default function App() {
  const [current, setCurrent] = useState('标题 2');

  return (
    <div
      lang="zh-CN"
      className="relative flex h-screen flex-col overflow-hidden bg-[#f5f7f9] font-['Noto_Sans','Noto_Sans_CJK_SC',sans-serif] text-xs whitespace-nowrap"
    >
      <TitleBar />
      <div className="relative z-10 bg-white shadow-[0_1px_4px_rgba(0,0,0,0.15)]">
        <MenuBar />
        <Ribbon current={current} onPick={setCurrent} />
      </div>
      <div className="flex min-h-0 flex-1">
        <VerticalRuler />
        <main className="flex min-w-0 flex-1 flex-col items-center overflow-hidden pl-2">
          <HorizontalRuler />
          <DocumentPage />
        </main>
        <Scrollbar />
        <StylePanel current={current} onPick={setCurrent} />
        <SideBar />
      </div>
      <StatusBar />
      <CornerOverlay />
    </div>
  );
}
